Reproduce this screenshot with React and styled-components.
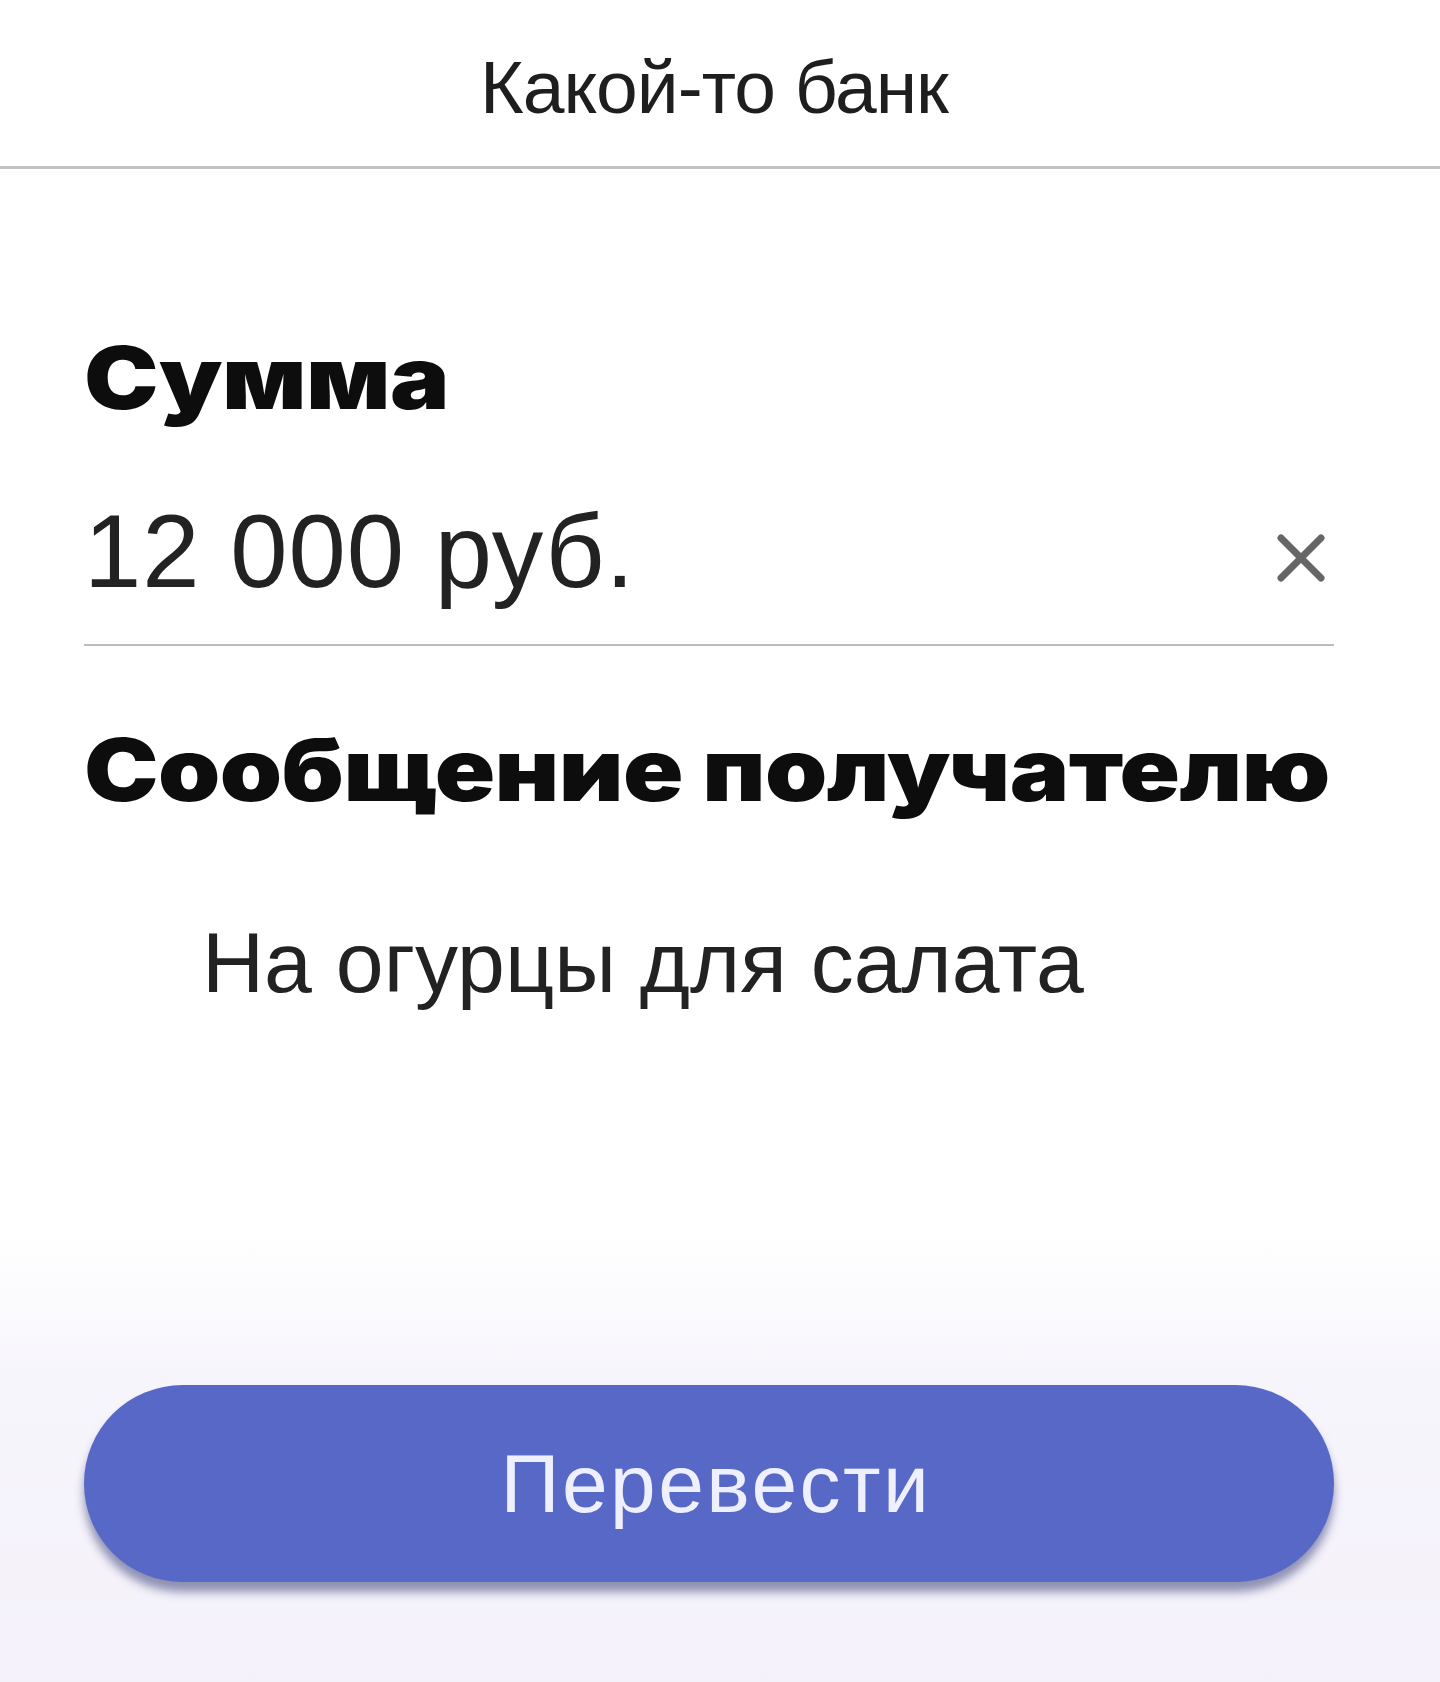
import React from 'react'
import styled, { createGlobalStyle } from 'styled-components'

const GlobalStyle = createGlobalStyle`
  html, body {
    margin: 0;
    padding: 0;
    background: #ffffff;
  }
  * {
    box-sizing: border-box;
  }
`

const App = () => {
  return (
    <Page>
      <GlobalStyle />
      <Header>
        <HeaderTitle>Какой-то банк</HeaderTitle>
      </Header>
      <Form>
        <Label>Сумма</Label>
        <AmountRow>
          <AmountValue>12 000 руб.</AmountValue>
          <ClearButton aria-label="Очистить">
            <svg width="52" height="52" viewBox="0 0 52 52">
              <path
                d="M6 6 L46 46 M46 6 L6 46"
                stroke="#666666"
                strokeWidth="7"
                strokeLinecap="round"
                fill="none"
              />
            </svg>
          </ClearButton>
        </AmountRow>
        <Label $top={81}>Сообщение получателю</Label>
        <Message>На огурцы для салата</Message>
        <SubmitButton>Перевести</SubmitButton>
      </Form>
    </Page>
  )
}

export default App

const Page = styled.div`
    min-height: 1682px;
    display: flex;
    flex-direction: column;
    overflow: hidden;
    background: linear-gradient(
      to bottom,
      #ffffff 0px,
      #ffffff 1230px,
      #f7f5fc 1380px,
      #f4f1fa 1682px
    );
`
const Header = styled.header`
    height: 169px;
    display: flex;
    align-items: center;
    justify-content: center;
    border-bottom: 3px solid #c2c2c4;
    padding: 8px 12px 0 0;
`
const HeaderTitle = styled.h1`
    margin: 0;
    font-family: "Liberation Sans", Arial, sans-serif;
    font-weight: 400;
    font-size: 75px;
    line-height: 1;
    letter-spacing: -1px;
    color: #1e1e1e;
`
const Form = styled.main`
    display: flex;
    flex-direction: column;
    padding: 0 106px 0 84px;
`
const Label = styled.h2`
    align-self: flex-start;
    margin: ${(p) => p.$top ?? 166}px 0 0;
    font-family: Inter, "DejaVu Sans", Arial, sans-serif;
    font-weight: 900;
    font-size: 86px;
    line-height: 1;
    letter-spacing: -0.5px;
    color: #0d0d0d;
    white-space: nowrap;
    transform: scaleX(1.16);
    transform-origin: left center;
`
const AmountRow = styled.div`
    margin-top: 79px;
    padding-bottom: 41px;
    border-bottom: 2px solid #bdbdbd;
    display: flex;
    align-items: center;
    justify-content: space-between;
`
const AmountValue = styled.div`
    font-family: "Liberation Sans", Arial, sans-serif;
    font-size: 103px;
    line-height: 1;
    letter-spacing: 1px;
    color: #222222;
`
const ClearButton = styled.button`
    width: 52px;
    height: 52px;
    margin-right: 7px;
    margin-top: 12px;
    padding: 0;
    border: none;
    background: none;
    display: flex;
    align-items: center;
    justify-content: center;
    cursor: pointer;
`
const Message = styled.div`
    margin-top: 106px;
    padding-left: 118px;
    font-family: "Liberation Sans", Arial, sans-serif;
    font-size: 86px;
    line-height: 1;
    color: #222222;
`
const SubmitButton = styled.button`
    margin-top: 380px;
    height: 197px;
    width: 100%;
    padding: 0 0 0 14px;
    border: none;
    border-radius: 99px;
    background: #5868c6;
    box-shadow: 0 10px 10px rgba(40, 48, 110, 0.5);
    font-family: "Liberation Sans", Arial, sans-serif;
    font-size: 82px;
    letter-spacing: 2.5px;
    color: #eef0ff;
    display: flex;
    align-items: center;
    justify-content: center;
    cursor: pointer;
`
